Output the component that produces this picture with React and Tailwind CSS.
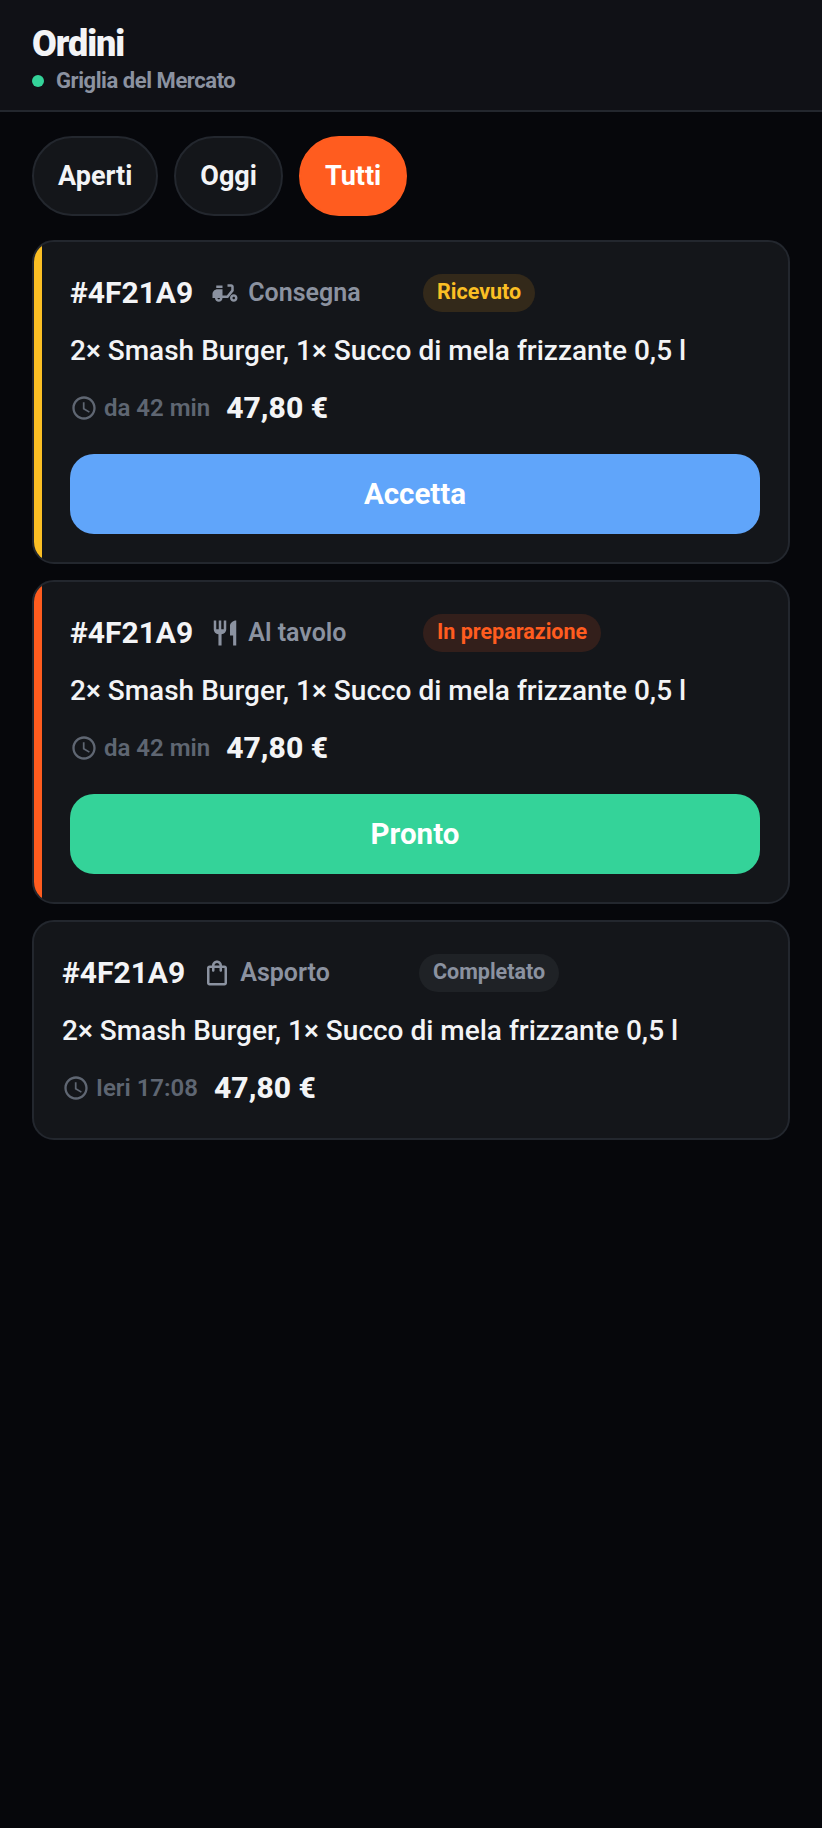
import React from 'react';
import { MdMoped, MdRestaurant, MdOutlineShoppingBag, MdOutlineSchedule } from 'react-icons/md';

const orders = [
  {
    mode: 'Consegna',
    Icon: MdMoped,
    status: 'Ricevuto',
    statusClass: 'bg-[#33291a] text-[#fbbf24]',
    time: 'da 42 min',
    accent: 'border-l-8 border-[#fbbf24]',
    action: 'Accetta',
    actionClass: 'bg-[#60a5fa]',
  },
  {
    mode: 'Al tavolo',
    Icon: MdRestaurant,
    status: 'In preparazione',
    statusClass: 'bg-[#331f1b] text-[#ff5c1f]',
    time: 'da 42 min',
    accent: 'border-l-8 border-[#ff5c1f]',
    action: 'Pronto',
    actionClass: 'bg-[#34d399]',
  },
  {
    mode: 'Asporto',
    Icon: MdOutlineShoppingBag,
    status: 'Completato',
    statusClass: 'bg-[#1f2226] text-[#8b92a0]',
    time: 'Ieri 17:08',
    accent: '',
  },
];

function OrderCard({ order }) {
  const { Icon } = order;
  return (
    <div className="rounded-[22px] border-2 border-[#23272e] bg-[#14161a] overflow-hidden">
      <div className={`p-7 ${order.accent}`}>
        <div className="grid grid-cols-2 gap-x-4 items-center">
          <div className="flex items-center">
            <span className="text-[30px] font-bold text-[#f3f4f6]">#4F21A9</span>
            <span className="flex items-center gap-2 ml-[17px] text-[25px] font-semibold text-[#8b92a0]">
              <Icon size={30} />
              {order.mode}
            </span>
          </div>
          <span className={`justify-self-start rounded-full h-[38px] px-[14px] flex items-center text-[21.5px] font-bold ${order.statusClass}`}>
            {order.status}
          </span>
        </div>
        <p className="mt-[15px] text-[28px] font-medium text-[#f3f4f6]">
          2× Smash Burger, 1× Succo di mela frizzante 0,5 l
        </p>
        <div className="mt-[13px] flex items-center">
          <MdOutlineSchedule size={28} className="text-[#5f6672]" />
          <span className="ml-[6px] text-[24px] font-semibold text-[#5f6672]">{order.time}</span>
          <span className="ml-[16px] text-[30px] font-extrabold text-[#f3f4f6]">47,80 €</span>
        </div>
        {order.action && (
          <button className={`mt-6 w-full h-[80px] rounded-[24px] text-[29.5px] font-bold text-white ${order.actionClass}`}>
            {order.action}
          </button>
        )}
      </div>
    </div>
  );
}

export default function App() {
  return (
    <div className="min-h-[1828px] bg-[#06070b] font-['Roboto',sans-serif]">
      <header className="h-[112px] bg-[#101116] border-b-2 border-[#23272e] px-8 pt-[23px]">
        <h1 className="text-[36px] leading-[42px] font-black tracking-[-0.03em] text-[#f3f4f6]">Ordini</h1>
        <div className="mt-[2px] flex items-center gap-3 text-[22px] leading-[28px] font-bold tracking-[-0.02em] text-[#8b92a0]">
          <span className="size-3 rounded-full bg-[#34d399]" />
          Griglia del Mercato
        </div>
      </header>
      <div className="flex gap-4 px-8 pt-6">
        <button className="h-20 px-6 rounded-full border-2 border-[#23272e] bg-[#14161a] text-[27px] font-bold text-[#f3f4f6]">Aperti</button>
        <button className="h-20 px-6 rounded-full border-2 border-[#23272e] bg-[#14161a] text-[27px] font-bold text-[#f3f4f6]">Oggi</button>
        <button className="h-20 px-6 rounded-full border-2 border-[#ff5c1f] bg-[#ff5c1f] text-[27px] font-bold text-white">Tutti</button>
      </div>
      <div className="flex flex-col gap-4 px-8 pt-6">
        {orders.map((order, i) => (
          <OrderCard key={i} order={order} />
        ))}
      </div>
    </div>
  );
}
